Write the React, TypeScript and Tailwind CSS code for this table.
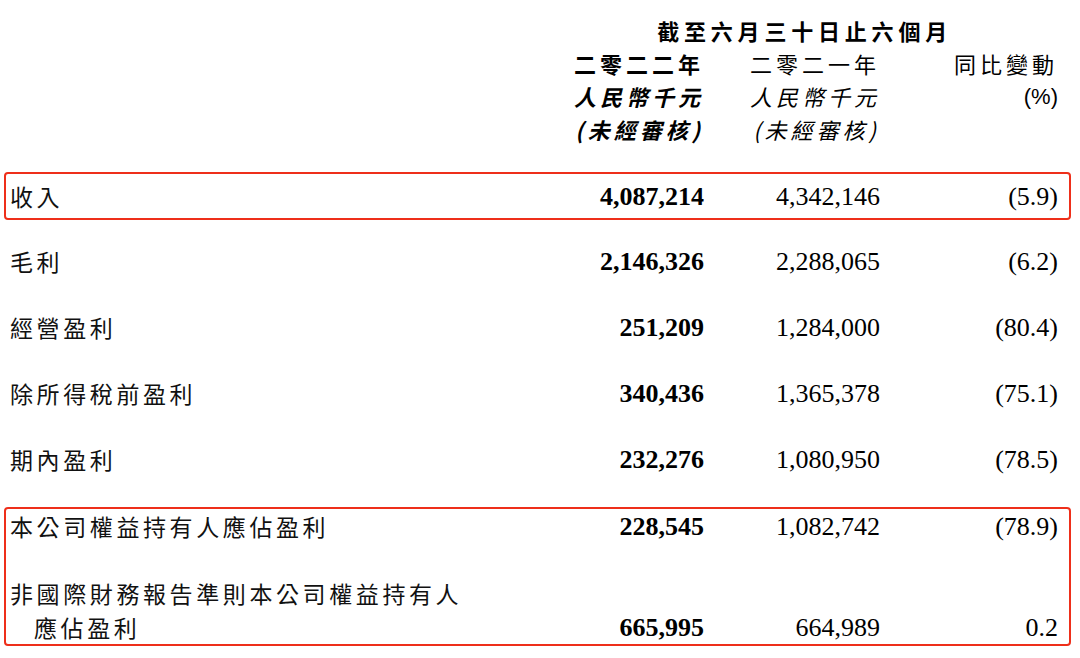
const cjk = "font-['Noto_Sans_CJK_TC','Noto_Sans_CJK_SC',sans-serif]";
const num = "font-['Liberation_Serif','Times_New_Roman',serif] text-[26px]";

type Row = { label: string; cur: string; prev: string; chg: string };

const plainRows: Row[] = [
  { label: "毛利", cur: "2,146,326", prev: "2,288,065", chg: "(6.2)" },
  { label: "經營盈利", cur: "251,209", prev: "1,284,000", chg: "(80.4)" },
  { label: "除所得稅前盈利", cur: "340,436", prev: "1,365,378", chg: "(75.1)" },
  { label: "期內盈利", cur: "232,276", prev: "1,080,950", chg: "(78.5)" },
];

function Cells({ cur, prev, chg }: { cur: string; prev: string; chg: string }) {
  return (
    <>
      <div className={`${num} w-[180px] text-right font-bold`}>{cur}</div>
      <div className={`${num} w-[176px] text-right`}>{prev}</div>
      <div className={`${num} w-[178px] text-right`}>{chg}</div>
    </>
  );
}

function Label({ children, className = "" }: { children: React.ReactNode; className?: string }) {
  return (
    <div className={`${cjk} flex-1 text-[23px] tracking-[3.6px] text-[#111] ${className}`}>{children}</div>
  );
}

export default function App() {
  return (
    <main className="w-[1080px] h-[658px] bg-white text-black overflow-hidden">
      {/* column headers */}
      <div className={`${cjk} pt-[14px] flex flex-col items-end pr-[22px] text-[22px] tracking-[4px] leading-[33px]`}>
        <div className="w-[485px] text-right font-bold pr-[106px] tracking-[4.8px]">截至六月三十日止六個月</div>
        <div className="flex">
          <div className="w-[135px] text-right font-bold">二零二二年</div>
          <div className="w-[176px] text-right">二零二一年</div>
          <div className="w-[178px] text-right">同比變動</div>
        </div>
        <div className="flex italic">
          <div className="w-[135px] text-right font-bold">人民幣千元</div>
          <div className="w-[176px] text-right">人民幣千元</div>
          <div className={`w-[178px] text-right not-italic font-['Liberation_Sans',sans-serif] tracking-normal text-[22px]`}>(%)</div>
        </div>
        <div className="flex italic">
          <div className="w-[135px] text-right font-bold">(未經審核)</div>
          <div className="w-[176px] text-right">(未經審核)</div>
          <div className="w-[178px]" />
        </div>
      </div>

      {/* revenue */}
      <div className="mt-[26px] mx-[4px] mr-[9px] border-2 border-[#ee2f1a] rounded-[4px]">
        <div className="h-[44px] flex items-center pl-[4px] pr-[11px]">
          <Label>收入</Label>
          <Cells cur="4,087,214" prev="4,342,146" chg="(5.9)" />
        </div>
      </div>

      <div className="mt-[8px] mx-[6px] mr-[11px]">
        {plainRows.map((r) => (
          <div key={r.label} className="h-[66px] flex items-center pl-[4px] pr-[11px]">
            <Label>{r.label}</Label>
            <Cells cur={r.cur} prev={r.prev} chg={r.chg} />
          </div>
        ))}
      </div>

      {/* attributable profit */}
      <div className="mt-[15px] mx-[4px] mr-[9px] border-2 border-[#ee2f1a] rounded-[4px]">
        <div className="h-[34px] flex items-center pl-[4px] pr-[11px]">
          <Label>本公司權益持有人應佔盈利</Label>
          <Cells cur="228,545" prev="1,082,742" chg="(78.9)" />
        </div>
        <div className="mt-[33px] h-[34px] flex items-center pl-[4px] pr-[11px]">
          <Label>非國際財務報告準則本公司權益持有人</Label>
        </div>
        <div className="h-[34px] flex items-center pl-[4px] pr-[11px]">
          <Label className="pl-[24px]">應佔盈利</Label>
          <Cells cur="665,995" prev="664,989" chg="0.2" />
        </div>
      </div>
    </main>
  );
}
